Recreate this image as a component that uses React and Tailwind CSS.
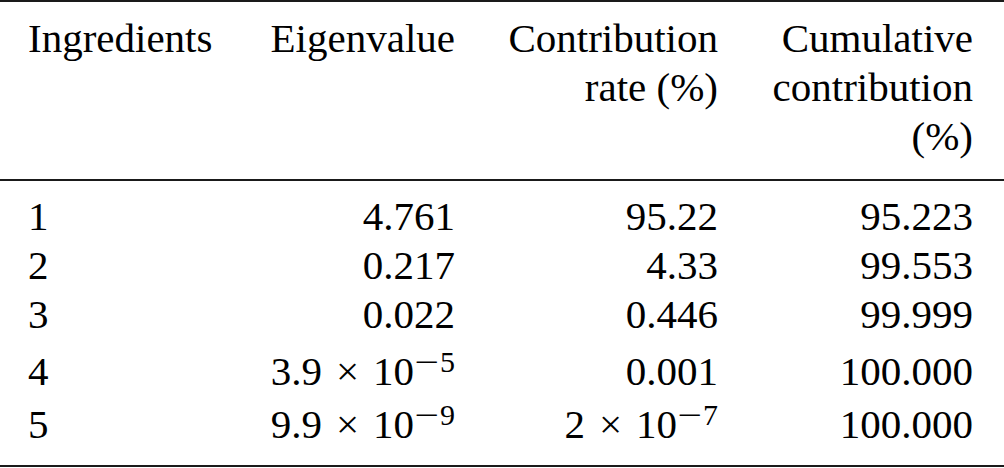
const Exp = ({ base, exp }) => (
  <span>
    {base}
    <span className="px-[14px]">×</span>
    10
    <sup className="text-[30px] -top-[13px]">
      <span className="inline-block w-[26px] text-center scale-x-[1.45]">−</span>
      {exp}
    </sup>
  </span>
);

const rows = [
  { n: "1", eig: "4.761", rate: "95.22", cum: "95.223", pad: "pt-[11px]" },
  { n: "2", eig: "0.217", rate: "4.33", cum: "99.553", pad: "pt-0" },
  { n: "3", eig: "0.022", rate: "0.446", cum: "99.999", pad: "pt-0" },
  { n: "4", eig: <Exp base="3.9" exp="5" />, rate: "0.001", cum: "100.000", pad: "pt-[8px]" },
  { n: "5", eig: <Exp base="9.9" exp="9" />, rate: <Exp base="2" exp="7" />, cum: "100.000", pad: "pt-[4px]" },
];

const Row = ({ children, className = "" }) => (
  <div className={`grid grid-cols-[200px_227px_263px_255px] pl-[28px] ${className}`}>{children}</div>
);

export default function App() {
  return (
    <div className="w-[1004px] h-[468px] bg-white text-black text-[41px] leading-[49px] font-[family-name:'Liberation_Serif','Times_New_Roman',serif]">
      <div className="border-t-2 border-[#1a1a1a]" />
      <Row className="pt-[12px] pb-[18px]">
        <div>Ingredients</div>
        <div className="text-right">Eigenvalue</div>
        <div className="text-right">
          Contribution
          <br />
          rate (%)
        </div>
        <div className="text-right">
          Cumulative
          <br />
          contribution
          <br />
          (%)
        </div>
      </Row>
      <div className="border-t-2 border-[#1a1a1a]" />
      <div className="pb-[16px]">
        {rows.map((r) => (
          <Row key={r.n} className={r.pad}>
            <div>{r.n}</div>
            <div className="text-right">{r.eig}</div>
            <div className="text-right">{r.rate}</div>
            <div className="text-right">{r.cum}</div>
          </Row>
        ))}
      </div>
      <div className="border-t-2 border-[#1a1a1a]" />
    </div>
  );
}
